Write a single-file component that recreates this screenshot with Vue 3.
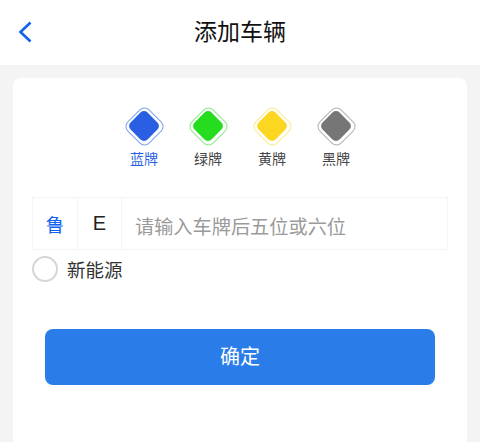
<template>
  <div class="page">
    <header class="nav">
      <a class="back">
        <svg width="16" height="24" viewBox="0 0 16 24">
          <path d="M13.5 2.5 L3.5 12 L13.5 21.5" fill="none" stroke="#0f62ee" stroke-width="2.6" />
        </svg>
      </a>
      <h1 class="title">添加车辆</h1>
    </header>

    <main class="card">
      <div class="plates">
        <div v-for="item in plates" :key="item.name" class="plate" :class="{ active: item.active }">
          <span class="diamond" :class="item.type"><i class="core"></i></span>
          <span class="name">{{ item.name }}</span>
        </div>
      </div>

      <div class="plate-input">
        <div class="cell province">鲁</div>
        <div class="cell letter">E</div>
        <div class="holder">请输入车牌后五位或六位</div>
      </div>

      <label class="energy">
        <span class="radio"></span>
        <span>新能源</span>
      </label>

      <button class="submit">确定</button>
    </main>
  </div>
</template>

<script setup>
const plates = [
  { name: '蓝牌', type: 'blue', active: true },
  { name: '绿牌', type: 'green' },
  { name: '黄牌', type: 'yellow' },
  { name: '黑牌', type: 'black' },
];
</script>

<style>
html,
body {
  margin: 0;
  background: #f4f4f4;
}
</style>

<style scoped>
.page {
  width: 480px;
  height: 442px;
  overflow: hidden;
  display: flex;
  flex-direction: column;
  background: #f4f4f4;
  font-family: "Noto Sans CJK SC", "Liberation Sans", sans-serif;
}

.nav {
  height: 65px;
  flex: none;
  position: relative;
  display: flex;
  align-items: center;
  justify-content: center;
  padding-bottom: 5px;
  box-sizing: border-box;
  background: #fff;
}

.back {
  position: absolute;
  left: 17px;
  top: 20px;
  height: 24px;
}

.title {
  margin: 0;
  font-size: 23px;
  font-weight: 400;
  color: #111;
}

.card {
  flex: 1;
  margin: 13px 13px 0;
  padding-top: 29px;
  background: #fff;
  border-radius: 8px 8px 0 0;
}

.plates {
  display: flex;
  justify-content: center;
}

.plate {
  width: 64px;
  display: flex;
  flex-direction: column;
  align-items: center;
  gap: 3px;
}

.diamond {
  width: 38px;
  height: 38px;
  display: flex;
  align-items: center;
  justify-content: center;
}

.diamond::before {
  content: "";
  position: absolute;
  width: 31px;
  height: 31px;
  box-sizing: border-box;
  border: 1.3px solid;
  border-radius: 7px;
  transform: rotate(45deg);
}

.core {
  width: 24px;
  height: 24px;
  border-radius: 5px;
  transform: rotate(45deg);
}

.blue::before {
  border-color: #7f9fec;
}

.blue .core {
  background: #2b5fe3;
}

.green::before {
  border-color: #8be98a;
}

.green .core {
  background: #26dc1f;
}

.yellow::before {
  border-color: #fbe98e;
}

.yellow .core {
  background: #fcd722;
}

.black::before {
  border-color: #b1b1b1;
}

.black .core {
  background: #767676;
}

.name {
  font-size: 14px;
  line-height: 20px;
  color: #444;
}

.active .name {
  color: #2b5fe3;
}

.plate-input {
  height: 53px;
  box-sizing: border-box;
  margin: 29px 19px 0;
  display: flex;
  border: 1px solid #f4f4f4;
}

.cell {
  width: 44px;
  flex: none;
  display: flex;
  align-items: center;
  justify-content: center;
  border-right: 1px solid #f4f4f4;
  font-size: 18.5px;
}

.province {
  color: #0f62ee;
}

.letter {
  width: 43px;
  font-family: "Liberation Sans", sans-serif;
  font-size: 20px;
  color: #222;
}

.holder {
  padding: 4px 0 0 13px;
  display: flex;
  align-items: center;
  font-size: 19.2px;
  color: #9a9a9a;
}

.energy {
  margin: 6px 19px 0;
  display: flex;
  align-items: center;
  gap: 9px;
  font-size: 18.5px;
  color: #333;
}

.radio {
  width: 26px;
  height: 26px;
  box-sizing: border-box;
  border: 2px solid #d6d6d6;
  border-radius: 50%;
}

.submit {
  display: block;
  width: 390px;
  height: 56px;
  margin: 47px 32px 0;
  padding: 0 0 4px;
  border: 0;
  border-radius: 8px;
  background: #2a7de9;
  color: #fff;
  font-family: inherit;
  font-size: 20px;
}
</style>
